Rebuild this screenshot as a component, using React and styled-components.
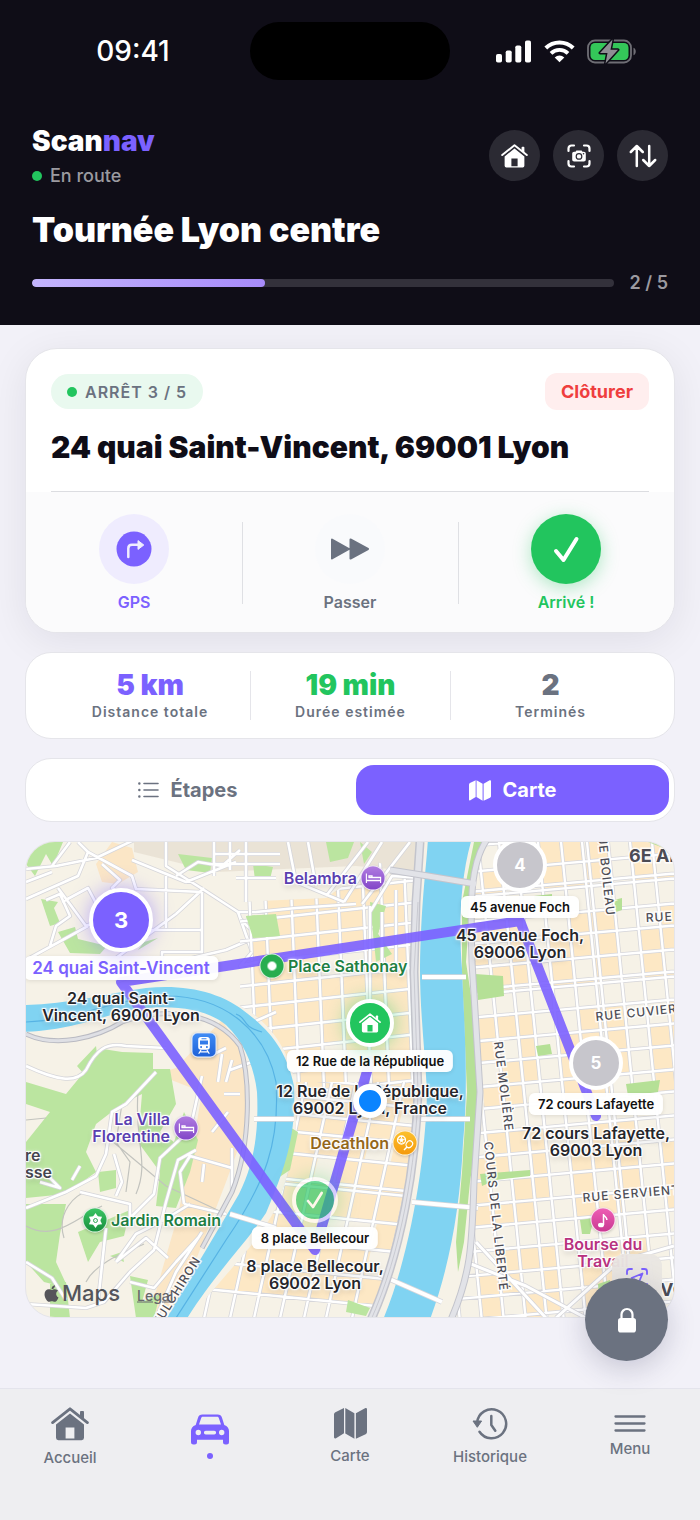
import React, { useState } from "react";
import styled, { createGlobalStyle, css } from "styled-components";
import { FaApple } from "react-icons/fa";

const Color = {
	Ink: "#0f0d17",
	Primary: "#7b61ff",
	Success: "#22c55e",
	Danger: "#ef3e3e",
	Muted: "#6b7280",
	Border: "#e5e5ea",
	Page: "#f2f1f8",
	Hotel: "#5b3fb0",
	Park: "#1f7f43",
	Shop: "#94671a",
	Music: "#b8327f",
	Place: "#45454f",
	Address: "#26262b",
};

const GlobalStyle = createGlobalStyle`
	*, *::before, *::after {
		box-sizing: border-box;
	}
	body {
		margin: 0;
		background: ${Color.Page};
		font-family: Inter, "Liberation Sans", sans-serif;
		color: ${Color.Ink};
	}
	button {
		font: inherit;
		border: 0;
		padding: 0;
		background: none;
		cursor: pointer;
	}
	h1, h2, p {
		margin: 0;
	}
	svg {
		display: block;
		flex-shrink: 0;
	}
`;

const Screen = styled.div`
	min-height: 100vh;
	display: flex;
	flex-direction: column;
`;

/* ---------- header ---------- */

const Header = styled.header`
	background: ${Color.Ink};
	color: #fff;
	padding: 22px 32px 31px;
`;

const StatusBar = styled.div`
	display: grid;
	grid-template-columns: 1fr 200px 1fr;
	align-items: center;
	height: 58px;
	font-size: 28px;
	font-weight: 500;
`;

const Clock = styled.time`
	justify-self: center;
	padding-right: 16px;
`;

const Island = styled.div`
	height: 58px;
	border-radius: 29px;
	background: #000;
`;

const StatusIcons = styled.div`
	justify-self: center;
	display: flex;
	align-items: center;
	gap: 12px;
	padding-left: 14px;
`;

const TopRow = styled.div`
	display: flex;
	justify-content: space-between;
	align-items: center;
	margin-top: 43px;
`;

const Logo = styled.div`
	font-size: 28px;
	line-height: 36px;
	font-weight: 900;

	span {
		color: ${Color.Primary};
	}
`;

const Status = styled.p`
	display: flex;
	align-items: center;
	gap: 8px;
	margin-top: 5px;
	font-size: 18px;
	line-height: 24px;
	font-weight: 500;
	color: #9b9aa0;
`;

const Dot = styled.span`
	width: 10px;
	height: 10px;
	border-radius: 50%;
	background: ${Color.Success};
`;

const HeaderButtons = styled.div`
	display: flex;
	gap: 13px;
`;

const RoundButton = styled.button`
	width: 51px;
	height: 51px;
	border-radius: 50%;
	background: #2b2a33;
	color: #fff;
	display: grid;
	place-items: center;
`;

const TourTitle = styled.h1`
	margin-top: 20px;
	font-size: 34px;
	line-height: 44px;
	font-weight: 900;
`;

const ProgressRow = styled.div`
	display: flex;
	align-items: center;
	gap: 16px;
	margin-top: 20px;
	font-size: 18px;
	line-height: 22px;
	font-weight: 600;
	color: #9b9aa0;
`;

const Track = styled.div`
	flex: 1;
	height: 8px;
	border-radius: 4px;
	background: #33313b;
	overflow: hidden;
`;

const Fill = styled.div`
	height: 100%;
	border-radius: 4px;
	background: linear-gradient(90deg, #c4b5fd, #a78bfa);
`;

/* ---------- content ---------- */

const Main = styled.main`
	flex: 1;
	display: flex;
	flex-direction: column;
	gap: 19px;
	padding: 23px 25px 70px;
`;

const Card = styled.section`
	background: #fff;
	border: 1px solid ${Color.Border};
	border-radius: 26px;
`;

const StopCard = styled(Card)`
	border-radius: 32px;
	overflow: hidden;
	box-shadow: 0 8px 40px rgba(15, 13, 40, 0.08);
`;

const StopHead = styled.div`
	margin: 0 25px;
	padding: 24px 0 25px;
	border-bottom: 1px solid #dcdde1;
`;

const StopMeta = styled.div`
	display: flex;
	justify-content: space-between;
	align-items: center;
`;

const Pill = styled.span`
	display: flex;
	align-items: center;
	gap: 8px;
	height: 35px;
	padding: 0 16px;
	border-radius: 18px;
	background: #e9f9ef;
	color: ${Color.Muted};
	font-size: 16px;
	font-weight: 600;
	letter-spacing: 1px;
`;

const CloseButton = styled.button`
	height: 37px;
	padding: 0 16px;
	border-radius: 12px;
	background: #ffeeee;
	color: ${Color.Danger};
	font-size: 18px;
	font-weight: 700;
`;

const Address = styled.h2`
	margin-top: 18px;
	font-size: 30px;
	line-height: 38px;
	font-weight: 900;
`;

const Actions = styled.div`
	display: grid;
	grid-template-columns: repeat(3, 1fr);
	padding: 22px 0 20px;
	background: #fbfbfc;
`;

const Action = styled.button`
	position: relative;
	display: flex;
	flex-direction: column;
	align-items: center;
	gap: 8px;
	color: ${(props) => props.$color};
	font-size: 16px;
	line-height: 20px;
	font-weight: 600;

	&:not(:first-child)::before {
		content: "";
		position: absolute;
		left: 0;
		top: 8px;
		bottom: 8px;
		border-left: 1px solid #dfe0e4;
	}
`;

const ActionIcon = styled.span`
	width: 70px;
	height: 70px;
	border-radius: 50%;
	display: grid;
	place-items: center;
	background: ${(props) => props.$bg};
	${(props) =>
		props.$glow &&
		css`
			box-shadow: 0 4px 18px rgba(34, 197, 94, 0.35);
		`}
`;

const Stats = styled(Card)`
	display: grid;
	grid-template-columns: repeat(3, 1fr);
	padding: 18px 24px;
`;

const Stat = styled.div`
	text-align: center;

	& + & {
		border-left: 1px solid ${Color.Border};
	}
`;

const StatValue = styled.p`
	color: ${(props) => props.$color};
	font-size: 28px;
	line-height: 28px;
	font-weight: 900;
`;

const StatLabel = styled.p`
	margin-top: 5px;
	color: ${Color.Muted};
	font-size: 14px;
	line-height: 16px;
	font-weight: 600;
	letter-spacing: 1px;
`;

const Tabs = styled(Card)`
	display: grid;
	grid-template-columns: 1fr 1fr;
	gap: 12px;
	padding: 6px 5px;
`;

const Tab = styled.button`
	height: 50px;
	border-radius: 18px;
	display: flex;
	align-items: center;
	justify-content: center;
	gap: 12px;
	font-size: 20px;
	font-weight: 700;
	background: ${(props) => (props.$active ? Color.Primary : "transparent")};
	color: ${(props) => (props.$active ? "#fff" : Color.Muted)};
`;

/* ---------- map ---------- */

const MapWrap = styled.div`
	position: relative;
	flex: 1;
	display: flex;
	min-height: 470px;
`;

const MapFrame = styled.div`
	position: relative;
	flex: 1;
	overflow: hidden;
	border: 1px solid ${Color.Border};
	border-radius: 30px;
	background: #f6f2e7;
`;

const Art = styled.svg`
	position: absolute;
	inset: 0;
	width: 100%;
	height: 100%;
`;

const shifts = {
	center: "translate(-50%, -50%)",
	start: "translate(0, -50%)",
	end: "translate(-100%, -50%)",
};

const OnMap = styled.div`
	position: absolute;
	left: ${(props) => props.$x}px;
	top: ${(props) => props.$y}px;
	transform: ${(props) => shifts[props.$from || "center"]};
`;

const MapText = styled(OnMap)`
	color: ${(props) => props.$color};
	font-size: 16px;
	line-height: 17px;
	font-weight: 600;
	white-space: pre;
	text-align: ${(props) => props.$from || "center"};
	text-shadow: 1px 1px 1px #fff, -1px -1px 1px #fff, 1px -1px 1px #fff,
		-1px 1px 1px #fff, 0 0 4px #fff, 0 3px 6px #0003;
`;

const Pin = styled(OnMap).attrs({ as: "button" })`
	width: ${(props) => props.$size}px;
	height: ${(props) => props.$size}px;
	border-radius: 50%;
	border: 4px solid #fff;
	background: ${(props) => props.$bg};
	opacity: ${(props) => props.$opacity || 1};
	box-shadow: 0 0 20px ${(props) => props.$glow || "transparent"};
	color: #fff;
	display: grid;
	place-items: center;
	font-size: ${(props) => (props.$size > 60 ? 22 : 17)}px;
	font-weight: 700;
`;

const Tag = styled(OnMap)`
	padding: ${(props) => (props.$current ? "2px 8px" : "2px 9px")};
	border-radius: 6px;
	background: #fffffff2;
	box-shadow: 0 1px 4px rgba(0, 0, 0, 0.1);
	color: ${(props) => (props.$current ? Color.Primary : "#111")};
	font-size: ${(props) => (props.$current ? 17 : 13)}px;
	line-height: ${(props) => (props.$current ? 20 : 18)}px;
	font-weight: 600;
	white-space: nowrap;
`;

const Badge = styled(OnMap)`
	width: 25px;
	height: 25px;
	border-radius: ${(props) => (props.$square ? 6 : 13)}px;
	border: 1px solid #ffffffcc;
	background: ${(props) => props.$bg};
	box-shadow: 0 1px 3px rgba(0, 0, 0, 0.2);
	display: grid;
	place-items: center;
	color: #fff;
`;

const Here = styled(OnMap)`
	width: 34px;
	height: 34px;
	border: 6px solid #fff;
	border-radius: 50%;
	background: #0a84ff;
	box-shadow: 0 1px 8px rgba(0, 0, 0, 0.2);
`;

const Brand = styled(OnMap)`
	display: flex;
	align-items: center;
	gap: 1px;
	color: #55555a;
	font-size: 22px;
	font-weight: 500;
`;

const LegalLink = styled(OnMap).attrs({ as: "a" })`
	color: #66666b;
	font-size: 14px;
	font-weight: 500;
`;

const Recenter = styled.button`
	position: absolute;
	right: 12px;
	bottom: 13px;
	width: 50px;
	height: 50px;
	border-radius: 12px;
	background: #e9e6e2f5;
	color: ${Color.Primary};
	display: grid;
	place-items: center;
`;

const LockButton = styled.button`
	position: absolute;
	right: 7px;
	bottom: -43px;
	width: 83px;
	height: 83px;
	border-radius: 50%;
	background: ${Color.Muted};
	box-shadow: 0 8px 28px rgba(50, 50, 90, 0.22);
	display: grid;
	place-items: center;
`;

/* ---------- bottom navigation ---------- */

const Nav = styled.nav`
	display: grid;
	grid-template-columns: repeat(5, 1fr);
	padding-bottom: 36px;
	background: #eeeef1;
	border-top: 1px solid #e4e4ec;
`;

const NavItem = styled.a`
	height: 95px;
	display: flex;
	flex-direction: column;
	align-items: center;
	justify-content: center;
	gap: 8px;
	color: ${(props) => (props.$active ? Color.Primary : Color.Muted)};
	font-size: 15px;
	line-height: 18px;
	font-weight: 500;
	text-decoration: none;
`;

const NavDot = styled.span`
	width: 6px;
	height: 6px;
	border-radius: 50%;
	background: ${Color.Primary};
`;

/* ---------- icons ---------- */

const HouseIcon = ({ width = 38 }) => (
	<svg width={width} height={Math.round((width * 34) / 38)} viewBox="0 0 38 34" aria-hidden="true">
		<path
			d="M1.6 15.6 19 1.8l17.4 13.8"
			fill="none"
			stroke="currentColor"
			strokeWidth="2.8"
			strokeLinecap="round"
			strokeLinejoin="round"
		/>
		<path d="M29 5.200c0-.8.4-1.200 1.200-1.200h1.600c.8 0 1.200.4 1.200 1.200v8l-4-3.200z" fill="currentColor" />
		<path
			fillRule="evenodd"
			fill="currentColor"
			d="M19 6.400 33 17.600v13.200a2.400 2.400 0 0 1-2.400 2.400H7.400A2.400 2.400 0 0 1 5 30.800V17.600zM14.600 20.500v11h8.800v-11z"
		/>
	</svg>
);

const CarIcon = () => (
	<svg width="38" height="31" viewBox="0 0 38 31" aria-hidden="true">
		<path
			fillRule="evenodd"
			fill="currentColor"
			d="M11.500.4h15c2.500 0 3.800 1 4.500 3.300l2.300 7.200c3.200 1.200 4.700 3.200 4.700 6.200v11a2.500 2.500 0 0 1-2.500 2.500h-1A2.500 2.500 0 0 1 32 28.100V25.700H6v2.400a2.500 2.500 0 0 1-2.500 2.500h-1A2.500 2.500 0 0 1 0 28.100v-11c0-3 1.500-5 4.700-6.200L7 3.700C7.700 1.400 9 .4 11.500.4zM8 10.400h22l-2.200-6.300c-.3-.9-.9-1.300-1.800-1.300H12c-.9 0-1.500.4-1.800 1.300zM7.300 15.800a2.700 2.700 0 1 0 0 5.400 2.700 2.700 0 0 0 0-5.400zM30.700 15.800a2.700 2.700 0 1 0 0 5.400 2.700 2.700 0 0 0 0-5.400zM14.800 16.700a1.900 1.900 0 0 0 0 3.800h8.400a1.900 1.900 0 0 0 0-3.800z"
		/>
	</svg>
);

const MapIcon = ({ width = 33 }) => (
	<svg width={width} height={Math.round((width * 31) / 33)} viewBox="0 0 33 31" aria-hidden="true">
		<path
			fill="currentColor"
			d="M0 6.800c0-1.200.4-1.900 1.400-2.500L10 0v25.300L2 30.200c-1.200.6-2 .1-2-1.200zM11.300 0l9.100 5.200v25.600l-9.100-5.400zM21.900 5.200 31 .3c1.200-.6 2-.1 2 1.200v22.300c0 1.200-.4 1.800-1.400 2.400l-9.700 4.600z"
		/>
	</svg>
);

const HistoryIcon = () => (
	<svg width="36" height="33" viewBox="0 0 36 33" aria-hidden="true">
		<g fill="none" stroke="currentColor" strokeWidth="2.5" strokeLinecap="round" strokeLinejoin="round">
			<path d="M5.200 15.500a14.500 14.500 0 1 1 2.300 9.200" />
			<path d="M19.300 9v9l4 5.800" />
		</g>
		<path d="M1 14h8.600L5.300 20.300z" fill="currentColor" stroke="currentColor" strokeLinejoin="round" />
	</svg>
);

const MenuIcon = () => (
	<svg width="32" height="17" viewBox="0 0 32 17" aria-hidden="true">
		<path d="M1.500 1.500h29M1.500 8.500h29M1.500 15.500h29" stroke="currentColor" strokeWidth="2.3" strokeLinecap="round" />
	</svg>
);

const ListIcon = () => (
	<svg width="21" height="16" viewBox="0 0 21 16" fill="none" stroke="currentColor" strokeLinecap="round" aria-hidden="true">
		<path d="M6 1.500h14M6 8h14M6 14.500h14" strokeWidth="1.6" />
		<path d="M1.300 1.500h.1M1.300 8h.1M1.300 14.500h.1" strokeWidth="2.4" />
	</svg>
);

const ScanIcon = () => (
	<svg width="24" height="24" viewBox="0 0 24 24" aria-hidden="true">
		<path
			d="M1.500 7V4.500a3 3 0 0 1 3-3H7M17 1.500h2.500a3 3 0 0 1 3 3V7M22.500 17v2.500a3 3 0 0 1-3 3H17M7 22.500H4.500a3 3 0 0 1-3-3V17"
			fill="none"
			stroke="currentColor"
			strokeWidth="2.2"
			strokeLinecap="round"
		/>
		<path
			d="M7.200 7.800h1.300l.9-1.300h5.200l.9 1.300h1.300c1.300 0 2 .7 2 2v5.700c0 1.300-.7 2-2 2H7.200c-1.300 0-2-.7-2-2V9.800c0-1.300.7-2 2-2z"
			fill="currentColor"
		/>
		<circle cx="12" cy="12.4" r="2.8" fill="none" stroke="#2b2a33" strokeWidth="1.2" />
		<circle cx="16.5" cy="9.8" r=".8" fill="#2b2a33" />
	</svg>
);

const SwapIcon = () => (
	<svg width="28" height="24" viewBox="0 0 28 24" aria-hidden="true">
		<path
			d="M7.800 22V2M1.800 8l6-6 6 6M20.200 2v20M14.200 16l6 6 6-6"
			fill="none"
			stroke="currentColor"
			strokeWidth="2.5"
			strokeLinecap="round"
			strokeLinejoin="round"
		/>
	</svg>
);

const CheckIcon = ({ width = 27 }) => (
	<svg width={width} height={width} viewBox="0 0 27 27" aria-hidden="true">
		<path d="m3 15 7.500 9L23.500 3" fill="none" stroke="#fff" strokeWidth="4" strokeLinecap="round" strokeLinejoin="round" />
	</svg>
);

const TurnIcon = () => (
	<svg width="36" height="36" viewBox="0 0 36 36" aria-hidden="true">
		<circle cx="18" cy="18" r="17.5" fill={Color.Primary} />
		<path d="M12.300 26v-8.500c0-2.500 1.200-3.700 3.700-3.700h6" fill="none" stroke="#f0edff" strokeWidth="2.5" strokeLinecap="round" />
		<path d="M22 9.600 27.800 14 22 18.400z" fill="#f0edff" stroke="#f0edff" strokeLinejoin="round" />
	</svg>
);

const ForwardIcon = () => (
	<svg width="40" height="22" viewBox="0 0 40 22" fill={Color.Muted} stroke={Color.Muted} strokeWidth="2" strokeLinejoin="round" aria-hidden="true">
		<path d="M2 1.500 19 11 2 20.500zM20.500 1.500 38 11 20.500 20.500z" />
	</svg>
);

const LockIcon = () => (
	<svg width="18" height="26" viewBox="0 0 18 26" aria-hidden="true">
		<path d="M3.500 12V7.500a5.500 5.500 0 0 1 11 0V12" fill="none" stroke="#fff" strokeWidth="2.2" />
		<rect y="11" width="18" height="14.5" rx="2.8" fill="#fff" />
	</svg>
);

const LocateIcon = () => (
	<svg width="24" height="24" viewBox="0 0 24 24" fill="none" stroke="currentColor" strokeWidth="1.8" strokeLinecap="round" strokeLinejoin="round" aria-hidden="true">
		<path d="M2 7V4.500A2.500 2.500 0 0 1 4.500 2H7M17 2h2.500A2.500 2.500 0 0 1 22 4.500V7M22 17v2.500a2.500 2.500 0 0 1-2.500 2.500H17M7 22H4.500A2.500 2.500 0 0 1 2 19.500V17" />
		<path d="m17.500 6.500-4.500 11-2-4.500-4.500-2z" />
	</svg>
);

const SignalIcon = () => (
	<svg width="36" height="23" viewBox="0 0 36 23" fill="#fff" aria-hidden="true">
		<rect y="14" width="6" height="8.5" rx="1.8" />
		<rect x="9.7" y="10.5" width="6" height="12" rx="1.8" />
		<rect x="19.3" y="5.5" width="6" height="17" rx="1.8" />
		<rect x="29" y="0.5" width="6" height="22" rx="1.8" />
	</svg>
);

const WifiIcon = () => (
	<svg width="31" height="23" viewBox="0 0 31 23" aria-hidden="true">
		<path d="M1.800 8a19.500 19.500 0 0 1 27.400 0" fill="none" stroke="#fff" strokeWidth="4" />
		<path d="M7 13.400a12.200 12.200 0 0 1 17 0" fill="none" stroke="#fff" strokeWidth="3.8" />
		<path d="M15.500 22.300 10.700 17.500a7 7 0 0 1 9.600 0z" fill="#fff" />
	</svg>
);

const BatteryIcon = () => (
	<svg width="50" height="25" viewBox="0 0 50 25" aria-hidden="true">
		<rect x="1" y="1.5" width="43" height="22" rx="7" fill="none" stroke="#6f6e75" strokeWidth="1.8" />
		<rect x="3.5" y="4" width="38" height="17" rx="4.5" fill="#34c759" />
		<path d="M46.500 8.800c3 .8 3 6.700 0 7.500z" fill="#6f6e75" />
		<path d="M25.500.5 13 14h7.500L18.500 24.500 31 10.800h-7.500z" fill="#8f8e94" stroke={Color.Ink} strokeWidth="3" paintOrder="stroke" strokeLinejoin="round" />
	</svg>
);

const BedIcon = () => (
	<svg width="16" height="11" viewBox="0 0 16 11" fill="none" stroke="#fff" strokeWidth="1.3" aria-hidden="true">
		<path d="M.8 1v9.500M.8 8h14.400M15.200 10.500V5H3.500V3.300h3V5" />
	</svg>
);

const TrainIcon = () => (
	<svg width="15" height="18" viewBox="0 0 15 18" aria-hidden="true">
		<path
			fillRule="evenodd"
			fill="#fff"
			d="M4.500.5h6c1.800 0 2.800 1 2.800 2.800v7.200c0 1.700-1 2.700-2.800 2.700h-6c-1.800 0-2.800-1-2.800-2.700V3.300C1.700 1.500 2.700.5 4.500.5zM3.500 4v4h8V4zM5 1.800v1h5v-1zM4.600 9.600a1 1 0 1 0 0 2 1 1 0 0 0 0-2zM10.400 9.600a1 1 0 1 0 0 2 1 1 0 0 0 0-2z"
		/>
		<path d="m4.500 13.500-2.300 3.800M10.500 13.500l2.300 3.800M3.500 15.400h8" stroke="#fff" strokeWidth="1.2" />
	</svg>
);

const FlowerIcon = () => (
	<svg width="16" height="16" viewBox="-8 -8 16 16" aria-hidden="true">
		{[0, 60, 120, 180, 240, 300].map((angle) => (
			<path key={angle} d="M0-7.600 2.800-3.500 0 0-2.800-3.500z" fill="#fff" transform={`rotate(${angle})`} />
		))}
		<circle r="2" fill="none" stroke="#1d9c45" strokeWidth=".9" />
	</svg>
);

const SportIcon = () => (
	<svg width="19" height="17" viewBox="0 0 19 17" fill="none" stroke="#fff" aria-hidden="true">
		<circle cx="6" cy="5.5" r="4" strokeWidth="1.3" />
		<circle cx="6" cy="5.5" r="1.5" fill="#fff" />
		<path d="M6 1.500v2M2.300 4.500l2 .5M9.700 4.500l-2 .5M4 9l1-2M8 9 7 7" />
		<ellipse cx="13.8" cy="9.7" rx="3" ry="3.6" transform="rotate(40 13.8 9.7)" strokeWidth="1.2" />
		<path d="m11.500 12.500-3 3" strokeWidth="1.5" />
	</svg>
);

const NoteIcon = () => (
	<svg width="11" height="16" viewBox="0 0 11 16" aria-hidden="true">
		<ellipse cx="3.5" cy="12.5" rx="3" ry="2.3" fill="#fff" />
		<path d="M6 12.500V1.500c.3 2.500 3.600 2.800 3.400 6" fill="none" stroke="#fff" strokeWidth="1.5" />
	</svg>
);

/* ---------- map drawing ---------- */

// straight streets of a slightly turned grid
const streets = (xs, lean, ys, slope, box) => {
	const [left, top, right, bottom] = box;
	const down = xs.map((x) => `M${x} ${top}L${x + (bottom - top) * lean} ${bottom}`);
	const across = ys.map((y) => `M${left} ${y}L${right} ${y + (right - left) * slope}`);
	return down.concat(across).join("");
};

// filled city blocks between those streets, some of them left out
const blocks = (xs, lean, ys, slope, box, skip) => {
	const [left, top] = box;
	const at = (x, y) => {
		const px = x + (y - top) * lean;
		return `${px.toFixed(1)} ${(y + (px - left) * slope).toFixed(1)}`;
	};
	let d = "";
	for (let i = 0; i < xs.length - 1; i++) {
		for (let j = 0; j < ys.length - 1; j++) {
			if ((i * 7 + j * 5 + i * j) % skip < 2) continue;
			d += `M${at(xs[i], ys[j])}L${at(xs[i + 1], ys[j])} ${at(xs[i + 1], ys[j + 1])} ${at(xs[i], ys[j + 1])}Z`;
		}
	}
	return d;
};

const EAST = {
	xs: [386, 408, 430, 452, 473, 490, 512, 535, 556, 561, 582, 604, 626, 648],
	ys: [6, 32, 52, 57, 82, 104, 128, 150, 155, 178, 202, 224, 248, 270, 294, 318, 342, 366, 388, 412, 436, 458, 480, 500],
	box: [420, 0, 660, 476],
};
const NORTH = {
	xs: [222, 238, 264, 289, 311, 336, 354, 378],
	ys: [58, 80, 100, 122, 145, 166, 190, 212, 236, 258, 280],
	box: [210, 20, 400, 250],
};
const SOUTH = {
	xs: [230, 256, 280, 306, 330, 352, 378, 404, 432],
	ys: [226, 244, 262, 280, 302, 328, 333, 362, 390, 418, 446],
	box: [170, 240, 410, 476],
};

const SAONE =
	"M-4 163C40 163 78 152 120 146C160 142 196 150 222 172C248 192 262 214 268 244C270 290 262 320 240 371C218 404 190 430 160 478H140C160 440 190 392 213 352C228 322 233 290 231 250C228 224 218 200 200 183C182 168 150 162 112 167C72 174 50 188-4 190Z";
const RHONE =
	"M402-4C400 30 395 60 394 127C394 170 399 210 401 250C400 310 386 410 356 480H403C422 430 434 370 437 301C443 240 438 180 436 127C433 90 433 40 446-4Z";

const WEST_ROADS = [
	"M0 27 30 24 70 16 108-2M26 24 44 0M0 57 52 34 62 10 52 0M62 10 106 34 110 47 176 50",
	"M0 40 26 30M32 46 60 84 96 70M0 118 62 84M20 58 34 52 44 74 30 84 24 104",
	"M36 60 62 46 82 84M76 22 94 38 86 46 96 52M140 0V24L178 48 212 70 226 110 240 134",
	"M106 18 160 40 210 20M178 46 150 72 90 116M176 50V88M140 34V86M120 88H176V110H136V122",
	"M150 34 172 20 196 24 214 8M188 0V34M204 0V28M220 0V60M188 12H254M188 22H254M210 36H250",
	"M212 70H262M214 76C230 96 240 98 262 96M228 96 200 108 140 122 90 140",
	"M0 224C30 238 50 242 60 228C70 208 80 200 100 204L140 206",
	"M0 366 40 350 70 334 80 312 86 270 100 262 130 230M54 350 104 362V376L128 352 134 316 164 288 176 234",
	"M88 312 96 340 90 354M14 340 34 346 22 334M46 338 54 324M0 420 26 436 40 458M0 462 60 466 78 460 104 430 128 408 140 360 152 318 170 308",
	"M80 386 72 460M90 420 110 392 138 378 164 362M90 420 120 396 142 416M104 440 128 446 150 420 172 396",
	"M158 362 154 330 164 314 206 326M158 362 200 372M176 340 178 322M206 306V350M130 476 150 430 176 390",
	"M184 214 200 206M192 240 196 212M204 228 226 220M186 290 202 270M198 252H214M200 240 206 218",
];

const CENTER_ROADS = [
	"M262 0 270 40 318 60M282 0 290 44M300 54 342 0M318 60 356 0M336 62 384 0M344 70 366 34 396 36",
	"M230 70 270 66 330 62M268 112 214 124 226 110M344 64V160M356 70V128M370 48V130M214 186 250 170",
];

const BRIDGES = ["M396 135H440M394 277H444M386 360 452 366M228 277H268M352 432 416 460M204 372 250 386"];

const RAILS = "M0 192C30 206 70 196 96 180C140 164 190 170 214 204C224 234 226 300 206 350L176 406";

const PARKS = [
	"M7 0H37L27 24 20 12 9 34 0 22ZM152 12 186 16 184 31 160 28ZM227 22 247 25 244 37 229 38ZM15 57 32 60 28 66 34 81 24 84Z",
	"M32 90 49 85 52 97 81 104 74 112 44 111ZM118 100 132 96 112 108ZM220 74 250 72 254 94 227 96ZM300 0H328L322 16 304 20Z",
	"M344 60 360 64 352 92 366 112 350 120ZM334 0 346 10 338 22Z",
	"M51 224 70 204 72 220 57 231ZM77 207 96 210 127 211 127 227 144 227 150 262 134 290 148 300 158 270 172 298 164 330 150 366 130 364 134 330 112 300 116 252 96 262 70 282 60 310 70 330 40 352 0 356V300L24 270 0 262V240L40 252Z",
	"M72 330 90 328 90 346 74 350ZM0 362 40 362 34 392 30 420 42 446 18 440 0 420ZM52 390 76 380 104 368 98 394 74 400 62 420ZM104 434 122 438 116 460 134 452 128 476 110 476Z",
	"M24 442 40 440 44 476H24ZM84 414 96 410 98 420ZM0 244 10 250 0 260Z",
];

const CENTER_PARKS =
	"M220 74 250 72 254 94 227 96ZM344 60 360 64 352 92 366 112 350 120ZM262 284 272 290 264 328 252 336ZM322 458 344 466 340 474 320 470Z";

const EAST_PARKS = [
	"M448 0H462L446 34 440 120 449 180 452 240 450 300 444 340 438 400 432 430 430 400 436 330 441 250 436 130 436 60Z",
	"M449 132 477 134 478 154 452 158ZM508 54 526 52V62L510 64ZM588 58 596 56V68L590 70ZM510 204 524 202 526 212 512 214ZM600 242 634 238 632 250 602 254Z",
	"M454 332 504 328 504 334 470 338 456 344ZM554 378 568 376 564 392 556 392ZM572 442 584 438V470H574ZM622 0H640L648 10Z",
];

const Roads = ({ d, width = 3 }) => (
	<g fill="none" strokeLinejoin="round">
		<path d={d} stroke="#d6d6da" strokeWidth={width + 1.6} />
		<path d={d} stroke="#fff" strokeWidth={width} />
	</g>
);

const District = ({ grid, lean, slope, skip }) => {
	const { xs, ys, box } = grid;
	return (
		<>
			<path d={blocks(xs, lean, ys, slope, box, skip)} fill="#fde8c5" />
			<Roads d={streets(xs, lean, ys, slope, box)} width={2.4} />
		</>
	);
};

const StreetName = styled.text`
	font-size: 12px;
	font-weight: 500;
	letter-spacing: 1px;
	fill: #4c4c55;
	stroke: #ffffffd0;
	stroke-width: 3px;
	paint-order: stroke;
`;

const AreaName = styled(StreetName)`
	font-size: 18px;
	font-weight: 700;
	letter-spacing: 0;
`;

const MapArt = () => (
	<Art viewBox="0 0 648 476" preserveAspectRatio="xMinYMin slice" aria-hidden="true">
		<defs>
			<clipPath id="east">
				<path d="M462 0H648V476H424C442 440 446 400 449 340L458 260 446 120C444 60 446 30 462 0Z" />
			</clipPath>
			<clipPath id="north">
				<path d="M214 60 300 56 350 20 388 30 384 130 390 252H270C268 210 240 176 214 164Z" />
			</clipPath>
			<clipPath id="south">
				<path d="M270 240H390C388 310 376 400 344 476H164C200 430 230 404 250 366 268 320 272 290 270 240Z" />
			</clipPath>
		</defs>

		<path d="M108 0H396V30L330 24 190 30 108 10Z" fill="#e5ddcf" opacity=".7" />
		<path
			d="M70 22 86 0 106 6 112 30 92 42 76 40ZM130 232 150 226 196 178 216 210 222 280 200 340 150 470 124 470 150 380 164 320 176 250Z"
			fill="#fbe6c6"
		/>
		{PARKS.map((d) => (
			<path key={d} d={d} fill="#bbe5a0" />
		))}
		<path
			d="M96 262 90 300 104 320 100 350M112 250C108 300 124 320 110 352M0 384C30 400 50 376 76 364M38 396C30 370 50 352 60 350M80 294 140 344 200 372M0 278 20 276M60 440C70 420 100 410 118 402"
			fill="none"
			stroke="#c2c3be"
			strokeWidth="1.2"
		/>
		<Roads d={WEST_ROADS.join("")} width={2.6} />

		<g clipPath="url(#north)">
			<District grid={NORTH} lean={0.04} slope={-0.11} skip={11} />
		</g>
		<g clipPath="url(#south)">
			<District grid={SOUTH} lean={-0.22} slope={0.1} skip={13} />
		</g>
		<path d={CENTER_PARKS} fill="#bbe5a0" />
		<Roads d={CENTER_ROADS.join("")} width={2.6} />
		<g clipPath="url(#east)">
			<District grid={EAST} lean={0.1} slope={-0.09} skip={5} />
		</g>
		{EAST_PARKS.map((d) => (
			<path key={d} d={d} fill="#b5e096" />
		))}
		<Roads d="M530 476 592 420 648 404M440 420 500 444 560 476M450 400 520 476" />

		<path d={SAONE} fill="#80d3f2" />
		<path d={RHONE} fill="#80d3f2" />
		<path
			d="M0 180C50 178 90 156 140 154C200 154 240 190 250 240C254 300 240 340 200 398L150 476M236 190C214 184 222 176 210 172"
			fill="none"
			stroke="#56b3e4"
			strokeWidth="1.2"
		/>
		<path d={RAILS} fill="none" stroke="#b9bac2" strokeWidth="5" />
		<path d={RAILS} fill="none" stroke="#dfe0e5" strokeWidth="3" />
		<Roads d={BRIDGES.join("")} width={4} />

		<g fill="none" strokeLinejoin="round">
			<path d="M394 0 390 60 388 130 392 250C390 320 376 410 344 480" stroke="#c3c4cc" strokeWidth="9" />
			<path d="M394 0 390 60 388 130 392 250C390 320 376 410 344 480" stroke="#e2e3e8" strokeWidth="6" />
			<path d="M392 60 388 130 392 250C390 320 376 410 344 480" stroke="#c9cad1" />
			<path d="M462-4C444 20 444 60 446 120L454 250 448 340C446 400 446 430 424 480M364 28 402 34 450 42" stroke="#c3c4cc" strokeWidth="7" />
			<path d="M462-4C444 20 444 60 446 120L454 250 448 340C446 400 446 430 424 480M364 28 402 34 450 42" stroke="#e2e3e8" strokeWidth="5" />
		</g>

		<path
			d="M344 219 289 408 95 140 494 79 570 274"
			fill="none"
			stroke={Color.Primary}
			strokeWidth="10"
			strokeLinecap="round"
			strokeLinejoin="round"
			opacity=".9"
		/>

		<StreetName transform="translate(572 -6) rotate(84)">UE BOILEAU</StreetName>
		<StreetName transform="translate(620 80) rotate(-3)">RUE</StreetName>
		<StreetName transform="translate(570 179) rotate(-6)">RUE CUVIER</StreetName>
		<StreetName transform="translate(557 360) rotate(-5)">RUE SERVIENT</StreetName>
		<StreetName transform="translate(468 200) rotate(83)">RUE MOLIÈRE</StreetName>
		<StreetName transform="translate(458 300) rotate(84)">COURS DE LA LIBERTÉ</StreetName>
		<StreetName transform="translate(133 485) rotate(-58)">TULCHIRON</StreetName>
		<AreaName x="603" y="20">6E AR</AreaName>
		<AreaName x="634" y="454">VO</AreaName>
	</Art>
);

const stops = [
	{ x: 95, y: 78, size: 64, bg: Color.Primary, glow: "#7b61ff80", mark: "3", tag: "24 quai Saint-Vincent", tagY: 126, current: true, text: "24 quai Saint-\nVincent, 69001 Lyon", textY: 165 },
	{ x: 494, y: 23, size: 54, bg: "#c7c6cc", mark: "4", tag: "45 avenue Foch", tagY: 65, text: "45 avenue Foch,\n69006 Lyon", textY: 102 },
	{ x: 570, y: 221, size: 54, bg: "#c7c6cc", mark: "5", tag: "72 cours Lafayette", tagY: 262, text: "72 cours Lafayette,\n69003 Lyon", textY: 300 },
	{ x: 344, y: 181, size: 48, bg: Color.Success, glow: "#22c55e80", mark: <HouseIcon width={22} />, tag: "12 Rue de la République", tagY: 219, text: "12 Rue de la République,\n69002 Lyon, France", textY: 258 },
	{ x: 289, y: 358, size: 46, bg: Color.Success, glow: "#22c55e80", opacity: 0.65, mark: <CheckIcon width={18} />, tag: "8 place Bellecour", tagY: 396, text: "8 place Bellecour,\n69002 Lyon", textY: 433 },
];

const purple = "linear-gradient(#b07be0, #8246c8)";
const pois = [
	{ x: 347, y: 36, bg: purple, icon: <BedIcon />, text: "Belambra", from: "end", color: Color.Hotel },
	{ x: 160, y: 286, bg: purple, icon: <BedIcon />, text: "La Villa\nFlorentine", from: "end", color: Color.Hotel },
	{ x: 379, y: 301, bg: "linear-gradient(#fbc02d, #f59a0c)", icon: <SportIcon />, text: "Decathlon", from: "end", color: Color.Shop },
	{ x: 246, y: 124, bg: "radial-gradient(#fff 0 4px, #27ad4f 5px)", text: "Place Sathonay", from: "start", color: Color.Park },
	{ x: 69, y: 378, bg: "linear-gradient(#3cc463, #178f3d)", icon: <FlowerIcon />, text: "Jardin Romain", from: "start", color: Color.Park },
];

const TourMap = () => (
	<MapFrame>
		<MapArt />
		{pois.map((poi) => (
			<React.Fragment key={poi.text}>
				<Badge $x={poi.x} $y={poi.y} $bg={poi.bg}>
					{poi.icon}
				</Badge>
				<MapText $x={poi.from === "end" ? poi.x - 16 : poi.x + 16} $y={poi.y} $from={poi.from} $color={poi.color}>
					{poi.text}
				</MapText>
			</React.Fragment>
		))}
		<Badge $x={178} $y={203} $square $bg="linear-gradient(#3f8cf5, #1f62d8)">
			<TrainIcon />
		</Badge>
		<Badge $x={577} $y={378} $bg="linear-gradient(#ee5db4, #c93a92)">
			<NoteIcon />
		</Badge>
		<MapText $x={577} $y={411} $color={Color.Music}>{"Bourse du\nTravail"}</MapText>
		<MapText $x={-1} $y={322} $from="start" $color={Color.Place}>{"re\nsse"}</MapText>

		{stops.map((stop) => (
			<MapText key={stop.text} $x={stop.x} $y={stop.textY} $color={Color.Address}>
				{stop.text}
			</MapText>
		))}
		{stops.map((stop) => (
			<React.Fragment key={stop.tag}>
				<Tag $x={stop.x} $y={stop.tagY} $current={stop.current}>
					{stop.tag}
				</Tag>
				<Pin aria-label={stop.tag} $x={stop.x} $y={stop.y} $size={stop.size} $bg={stop.bg} $glow={stop.glow} $opacity={stop.opacity}>
					{stop.mark}
				</Pin>
			</React.Fragment>
		))}
		<Here $x={344} $y={259} />
		<Brand $x={16} $y={451} $from="start">
			<FaApple size={19} />
			Maps
		</Brand>
		<LegalLink href="#legal" $x={111} $y={453} $from="start">
			Legal
		</LegalLink>
		<Recenter aria-label="Recentrer">
			<LocateIcon />
		</Recenter>
	</MapFrame>
);

const actions = [
	{ label: "GPS", color: Color.Primary, bg: "#efecfe", icon: <TurnIcon /> },
	{ label: "Passer", color: Color.Muted, bg: "#f9fafc", icon: <ForwardIcon /> },
	{ label: "Arrivé !", color: Color.Success, bg: Color.Success, glow: true, icon: <CheckIcon /> },
];

const stats = [
	{ value: "5 km", label: "Distance totale", color: Color.Primary },
	{ value: "19 min", label: "Durée estimée", color: Color.Success },
	{ value: "2", label: "Terminés", color: Color.Muted },
];

export default function App() {
	const [tab, setTab] = useState("map");
	const done = 2;
	const total = 5;

	return (
		<Screen>
			<GlobalStyle />
			<Header>
				<StatusBar>
					<Clock>09:41</Clock>
					<Island />
					<StatusIcons>
						<SignalIcon />
						<WifiIcon />
						<BatteryIcon />
					</StatusIcons>
				</StatusBar>
				<TopRow>
					<div>
						<Logo>
							Scan<span>nav</span>
						</Logo>
						<Status>
							<Dot />
							En route
						</Status>
					</div>
					<HeaderButtons>
						<RoundButton aria-label="Accueil">
							<HouseIcon width={27} />
						</RoundButton>
						<RoundButton aria-label="Scanner">
							<ScanIcon />
						</RoundButton>
						<RoundButton aria-label="Réordonner">
							<SwapIcon />
						</RoundButton>
					</HeaderButtons>
				</TopRow>
				<TourTitle>Tournée Lyon centre</TourTitle>
				<ProgressRow>
					<Track>
						<Fill style={{ width: `${(done / total) * 100}%` }} />
					</Track>
					<span>
						{done} / {total}
					</span>
				</ProgressRow>
			</Header>

			<Main>
				<StopCard>
					<StopHead>
						<StopMeta>
							<Pill>
								<Dot />
								ARRÊT 3 / 5
							</Pill>
							<CloseButton>Clôturer</CloseButton>
						</StopMeta>
						<Address>24 quai Saint-Vincent, 69001 Lyon</Address>
					</StopHead>
					<Actions>
						{actions.map((action) => (
							<Action key={action.label} $color={action.color}>
								<ActionIcon $bg={action.bg} $glow={action.glow}>
									{action.icon}
								</ActionIcon>
								{action.label}
							</Action>
						))}
					</Actions>
				</StopCard>

				<Stats>
					{stats.map((stat) => (
						<Stat key={stat.label}>
							<StatValue $color={stat.color}>{stat.value}</StatValue>
							<StatLabel>{stat.label}</StatLabel>
						</Stat>
					))}
				</Stats>

				<Tabs>
					<Tab $active={tab === "steps"} onClick={() => setTab("steps")}>
						<ListIcon />
						Étapes
					</Tab>
					<Tab $active={tab === "map"} onClick={() => setTab("map")}>
						<MapIcon width={22} />
						Carte
					</Tab>
				</Tabs>

				<MapWrap>
					<TourMap />
					<LockButton aria-label="Verrouiller">
						<LockIcon />
					</LockButton>
				</MapWrap>
			</Main>

			<Nav>
				<NavItem href="#accueil">
					<HouseIcon />
					Accueil
				</NavItem>
				<NavItem href="#tournee" $active aria-label="Tournée">
					<CarIcon />
					<NavDot />
				</NavItem>
				<NavItem href="#carte">
					<MapIcon />
					Carte
				</NavItem>
				<NavItem href="#historique">
					<HistoryIcon />
					Historique
				</NavItem>
				<NavItem href="#menu">
					<MenuIcon />
					Menu
				</NavItem>
			</Nav>
		</Screen>
	);
}
